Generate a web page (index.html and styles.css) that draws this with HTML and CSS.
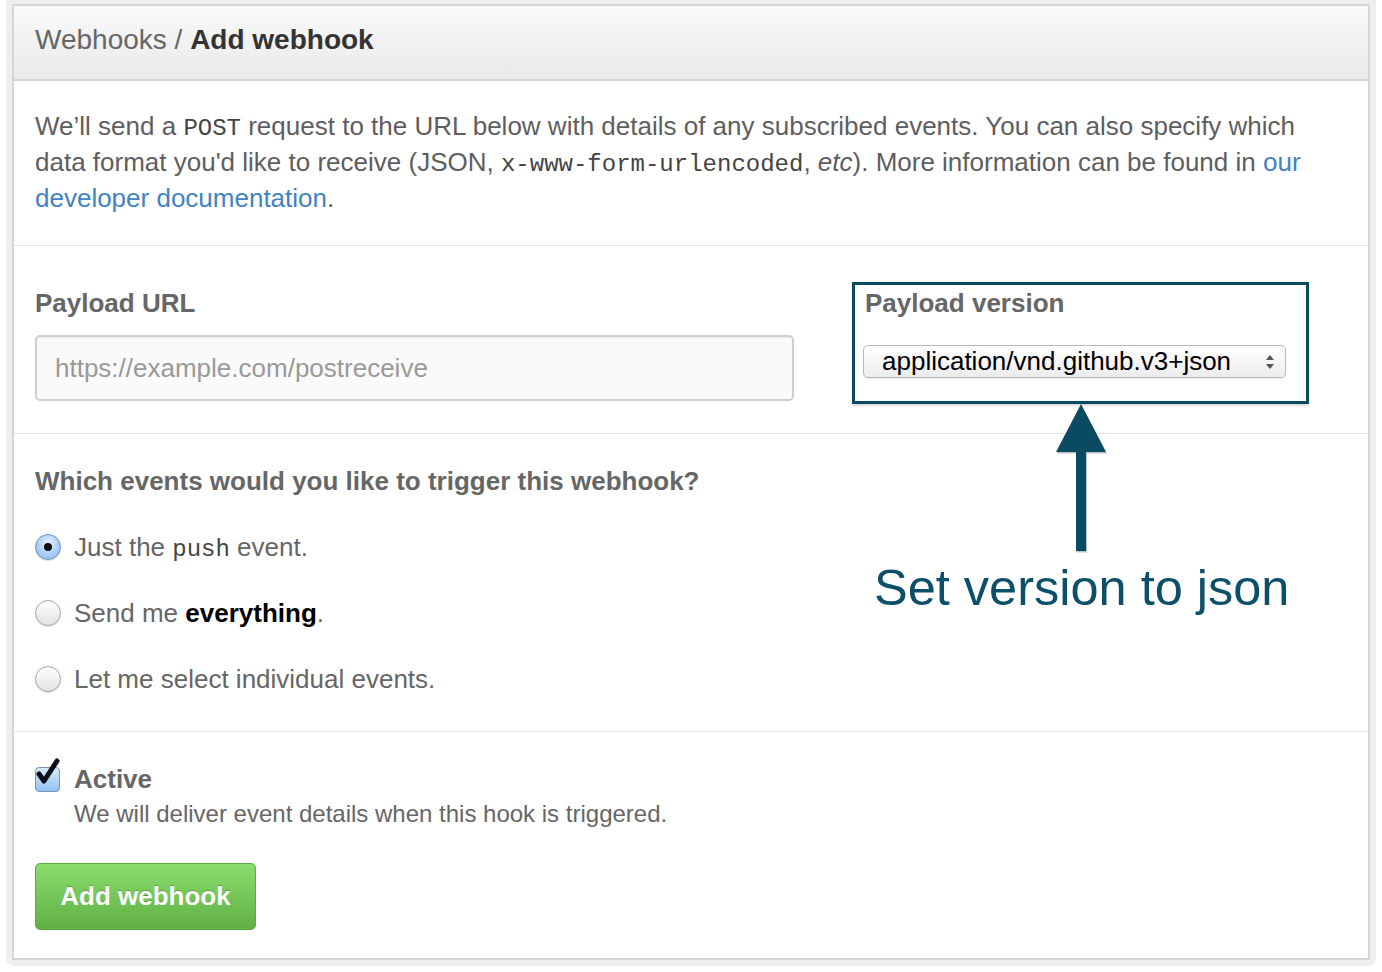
FILE: index.html
```html
<!DOCTYPE html>
<html>
<head>
<meta charset="utf-8">
<link rel="stylesheet" href="styles.css">
</head>
<body>
<div class="page">
  <div class="frame">
    <div class="box">
      <div class="box-header"><span class="crumb">Webhooks /</span> <strong>Add webhook</strong></div>

      <div class="section intro">
        <p>We’ll send a <code>POST</code> request to the URL below with details of any subscribed events. You can also specify which data format you'd like to receive (JSON, <code>x-www-form-urlencoded</code>, <em>etc</em>). More information can be found in <a href="#">our developer documentation</a>.</p>
      </div>

      <div class="section payload">
        <div class="field url-field">
          <label class="label">Payload URL</label>
          <div class="text-input">https://example.com/postreceive</div>
        </div>
        <div class="field version-field">
          <label class="label">Payload version</label>
          <div class="select">
            <span>application/vnd.github.v3+json</span>
            <svg class="select-arrows" width="10" height="18" viewBox="0 0 10 18"><polygon points="5,2 9,7 1,7" fill="#555"/><polygon points="1,11 9,11 5,16" fill="#555"/></svg>
          </div>
        </div>
      </div>

      <div class="section events">
        <h3 class="heading">Which events would you like to trigger this webhook?</h3>
        <div class="radio-row"><span class="radio checked"></span><span>Just the <code>push</code> event.</span></div>
        <div class="radio-row"><span class="radio"></span><span>Send me <strong class="strong">everything</strong>.</span></div>
        <div class="radio-row"><span class="radio"></span><span>Let me select individual events.</span></div>
      </div>

      <div class="section active">
        <div class="check-row">
          <span class="checkbox">
            <svg width="30" height="32" viewBox="0 0 30 32"><path d="M6 17 L11 24 L24 4" fill="none" stroke="#0d0d1a" stroke-width="5" stroke-linecap="round" stroke-linejoin="round"/></svg>
          </span>
          <div class="check-text">
            <div class="check-title">Active</div>
            <div class="check-note">We will deliver event details when this hook is triggered.</div>
          </div>
        </div>
        <button class="btn">Add webhook</button>
      </div>
    </div>
  </div>

  <svg class="arrow" width="62" height="156" viewBox="1050 400 62 156">
    <polygon points="1081,405 1106,452 1086,452 1086,551 1076,551 1076,452 1056,452" fill="#b8c4c8" transform="translate(1,1.5)"/>
    <polygon points="1081,404 1106,452 1086,452 1086,551 1076,551 1076,452 1056,452" fill="#0b4b61"/>
  </svg>
  <div class="note">Set version to json</div>
</div>
</body>
</html>
```

FILE: styles.css
```css
* { box-sizing: border-box; }
html, body { margin: 0; padding: 0; background: #fff; }
body {
  font-family: "Liberation Sans", Arial, Helvetica, sans-serif;
  color: #666;
  font-size: 26px;
}
.page { position: relative; width: 1382px; height: 972px; }
.frame {
  margin: 0 6px;
  padding: 4px 6px 6px 6px;
  background: #eeeeee;
  border-radius: 0 0 8px 8px;
}
.box {
  border: 2px solid #d6d6d6;
  background: #fff;
}
.box-header {
  height: 75px;
  padding: 18px 21px 0;
  line-height: 32px;
  font-size: 28px;
  background: linear-gradient(#fafafa, #e9e9e9);
  border-bottom: 2px solid #d4d4d4;
  color: #666;
}
.box-header strong { color: #333; font-weight: bold; }
.section {
  padding: 0 21px;
  border-top: 1px solid #e4e4e4;
}
.box-header + .section { border-top: none; }
.intro { padding-top: 27px; padding-bottom: 29px; }
.intro p { margin: 0; line-height: 36px; color: #5e5e5e; }
code {
  font-family: "Liberation Mono", "Courier New", monospace;
  font-size: 24px;
  line-height: 1;
  color: #444;
}
a { color: #4183c4; text-decoration: none; }
em { font-style: italic; }

.payload {
  display: flex;
  align-items: flex-start;
  gap: 58px;
  padding-top: 36px;
  padding-bottom: 29px;
}
.field { display: flex; flex-direction: column; }
.label {
  font-weight: bold;
  line-height: 32px;
  color: #666;
}
.url-field { width: 759px; padding-top: 5px; }
.text-input {
  margin-top: 16px;
  height: 66px;
  border: 2px solid #cfcfcf;
  border-radius: 5px;
  background: #fafafa;
  box-shadow: inset 0 1px 2px rgba(0,0,0,0.06);
  padding-left: 18px;
  line-height: 62px;
  color: #999;
}
.version-field {
  width: 457px;
  border: 3px solid #0b4b61;
  padding: 2px 20px 23px 8px;
  box-shadow: 0 2px 2px rgba(0,0,0,0.15);
}
.version-field .label { padding-left: 2px; }
.select {
  margin-top: 26px;
  height: 33px;
  border: 1px solid #b8b8b8;
  border-radius: 5px;
  background: linear-gradient(#ffffff, #ececec);
  box-shadow: 0 1px 1px rgba(0,0,0,0.08);
  display: flex;
  align-items: center;
  justify-content: space-between;
  padding: 0 10px 0 18px;
  color: #000;
  line-height: 31px;
}
.select-arrows { display: block; }

.events { padding-top: 31px; padding-bottom: 34px; }
.heading {
  margin: 0 0 32px;
  font-size: 26px;
  line-height: 32px;
  font-weight: bold;
  color: #666;
}
.radio-row {
  display: flex;
  align-items: center;
  gap: 13px;
  height: 36px;
  margin-bottom: 30px;
}
.radio-row:last-child { margin-bottom: 0; }
.radio {
  width: 26px;
  height: 26px;
  border-radius: 50%;
  border: 1px solid #a5a5a5;
  background: linear-gradient(#ffffff, #e2e2e2);
  box-shadow: 0 1px 1px rgba(0,0,0,0.15);
  flex: none;
  position: relative;
}
.radio.checked {
  border-color: #6d8fb8;
  background: radial-gradient(circle at 50% 35%, #e6f2ff 0%, #a9d0f5 55%, #7eb4ea 100%);
}
.radio.checked::after {
  content: "";
  position: absolute;
  left: 50%;
  top: 50%;
  width: 8px;
  height: 8px;
  margin: -4px 0 0 -4px;
  border-radius: 50%;
  background: #111;
}
.strong { color: #000; font-weight: bold; }

.active { padding-top: 32px; padding-bottom: 28px; }
.check-row { display: flex; align-items: flex-start; gap: 14px; }
.checkbox {
  flex: none;
  width: 25px;
  height: 25px;
  margin-top: 3px;
  border: 1px solid #7e94b4;
  border-radius: 4px;
  background: linear-gradient(#d7e9fb, #91c3f2);
  position: relative;
}
.checkbox svg { position: absolute; left: -3px; top: -11px; }
.check-title { font-weight: bold; line-height: 30px; color: #666; }
.check-note { margin-top: 5px; line-height: 30px; font-size: 24px; color: #666; }
.btn {
  display: block;
  margin-top: 34px;
  width: 221px;
  height: 67px;
  border: 1px solid #5ca941;
  border-radius: 5px;
  background: linear-gradient(#8add6d, #60b044);
  color: #fff;
  font-family: "Liberation Sans", Arial, sans-serif;
  font-size: 26px;
  font-weight: bold;
  text-shadow: 0 -1px 0 rgba(0,0,0,0.25);
  padding: 0;
}

.arrow { position: absolute; left: 1050px; top: 400px; }
.note {
  position: absolute;
  left: 874px;
  top: 560px;
  font-size: 50.5px;
  line-height: 56px;
  color: #0c4f68;
  white-space: nowrap;
}
```
